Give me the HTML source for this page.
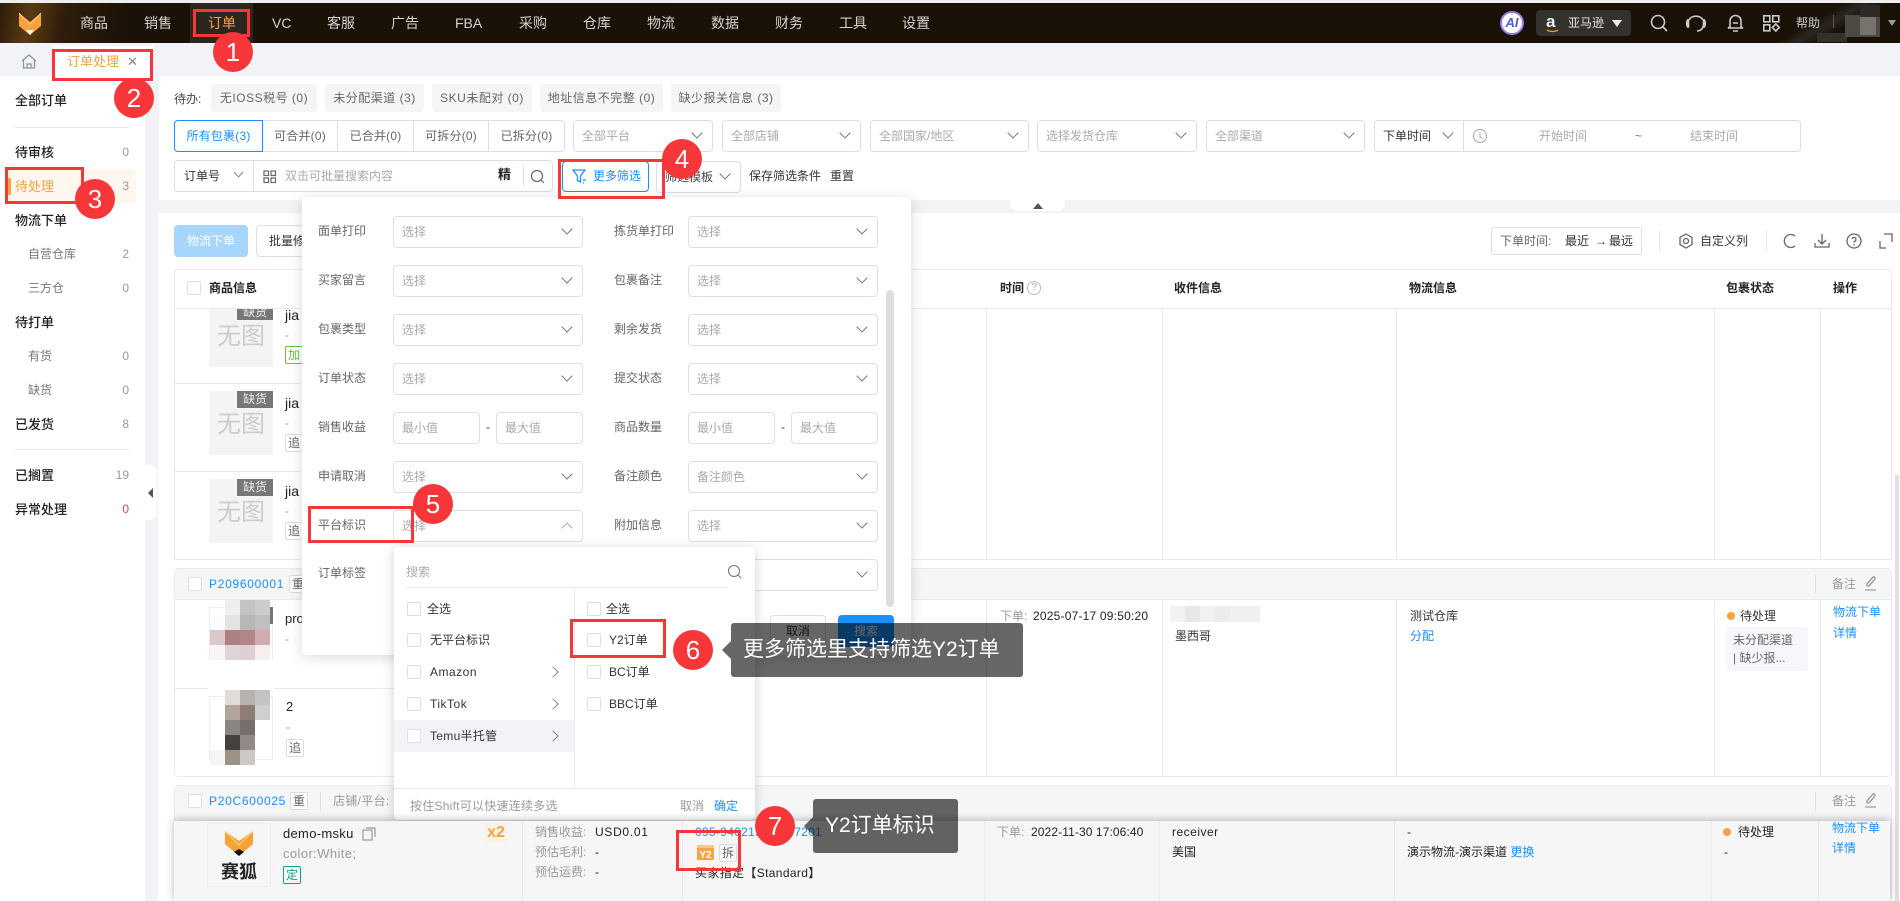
<!DOCTYPE html>
<html lang="zh-CN"><head><meta charset="utf-8"><title>订单处理</title>
<style>
*{box-sizing:border-box}
html,body{margin:0;padding:0}
body{width:1900px;height:901px;overflow:hidden;position:relative;background:#f2f3f7;font:12px/18px "Liberation Sans","Noto Sans CJK SC",sans-serif;color:#333}
.a{position:absolute;white-space:nowrap}
.b{position:absolute;background:#fff}
.nav{color:#d6d3cf;font-size:14px;line-height:20px;top:13px}
.side{left:15px;font-size:13px;color:#222;font-weight:500;line-height:20px}
.sub{left:28px;font-size:12px;color:#777;line-height:20px}
.n{left:95px;width:34px;text-align:right;color:#999;font-size:12px;line-height:20px}
.chip{position:absolute;top:84px;height:28px;background:#f4f5f7;border-radius:3px;color:#666;text-align:center;line-height:28px;white-space:nowrap;letter-spacing:.5px}
.seg{position:absolute;top:120px;height:32px;border:1px solid #dcdfe6;border-left:0;text-align:center;line-height:30px;color:#666;background:#fff;letter-spacing:.2px}
.s{position:absolute;height:32px;border:1px solid #dcdfe6;border-radius:4px;background:#fff;padding-left:8px;line-height:30px;color:#aaa;white-space:nowrap}
.s i,.ch{position:absolute;right:11px;top:8px;width:8px;height:8px;border-right:1.3px solid #777;border-bottom:1.3px solid #777;transform:rotate(45deg)}
.ch{right:auto}
.lb{color:#666}
.th{font-weight:700;color:#222;top:279px}
.v{position:absolute;width:1px;background:#e8eaef}
.h{position:absolute;height:1px;background:#e8eaef}
.ph{position:absolute;width:64px;height:64px;background:#f4f4f4;color:#ccc;font-size:24px;line-height:68px;text-align:center}
.ph b{position:absolute;right:0;top:0;width:36px;height:17px;background:#777;color:#eee;font-size:12px;font-weight:400;line-height:17px}
.tag{position:absolute;border:1px solid #ddd;border-radius:2px;text-align:center;color:#666;line-height:16px;background:#fff;width:18px;height:18px}
.cb{position:absolute;width:14px;height:14px;border:1px solid #dcdfe6;border-radius:2px;background:#fff}
.bl{color:#1890ff}
.gr{color:#999}
.rb{position:absolute;border:3px solid #f73639;z-index:20}
.c{position:absolute;width:40px;height:40px;border-radius:50%;background:#f73639;color:#fff;font-size:26px;line-height:40px;text-align:center;z-index:21}
.tip{position:absolute;background:rgba(0,0,0,.6);border-radius:3px;color:#fff;font-size:21px;line-height:54px;height:54px;z-index:19;white-space:nowrap}
.tip:before{content:"";position:absolute;left:-9px;top:18px;border:9px solid transparent;border-left:0;border-right-color:rgba(0,0,0,.6)}
svg{position:absolute;left:0;top:0}
</style></head><body>

<!-- top -->
<div class="b" style="left:0;top:0;width:1900px;height:3px;background:#eee"></div>
<div class="a" style="left:0;top:3px;width:1900px;height:40px;background:linear-gradient(100deg,#2c1c0a 0,#5a3a14 32px,#2e1d0a 65px,#1a1107 130px,#191106 100%)"></div>
<div class="a" style="left:1760px;top:3px;width:140px;height:40px;background:linear-gradient(150deg,transparent 40%,#2a2620 50%,transparent 60%)"></div>
<div class="a" style="left:190px;top:3px;width:63px;height:40px;background:#2c261e"></div>
<div class="a nav" style="left:80px">商品</div><div class="a nav" style="left:144px">销售</div>
<div class="a nav" style="left:208px;color:#f8a23c">订单</div><div class="a nav" style="left:272px">VC</div>
<div class="a nav" style="left:327px">客服</div><div class="a nav" style="left:391px">广告</div>
<div class="a nav" style="left:455px">FBA</div><div class="a nav" style="left:519px">采购</div>
<div class="a nav" style="left:583px">仓库</div><div class="a nav" style="left:647px">物流</div>
<div class="a nav" style="left:711px">数据</div><div class="a nav" style="left:775px">财务</div>
<div class="a nav" style="left:839px">工具</div><div class="a nav" style="left:902px">设置</div>
<div class="a" style="left:1536px;top:10px;width:95px;height:26px;background:#35322d;border-radius:4px"></div>
<div class="a" style="left:1546px;top:11px;color:#eee;font-size:17px;line-height:22px;font-weight:700">a</div>
<div class="a" style="left:1568px;top:14px;color:#e6e6e6">亚马逊</div>
<div class="a" style="left:1796px;top:14px;color:#ccc">帮助</div>
<div class="a" style="left:1500px;top:11px;width:24px;height:24px;border-radius:50%;background:#fff;border:2px solid #8f7cf0;color:#4a5be0;font-size:13px;font-weight:700;font-style:italic;line-height:20px;text-align:center">AI</div>

<!-- tab bar -->
<div class="b" style="left:52px;top:46px;width:101px;height:30px"></div>
<div class="a" style="left:67px;top:53px;color:#f8a23c;font-size:13px">订单处理</div>
<div class="a" style="left:127px;top:53px;color:#888;font-size:13px">✕</div>

<!-- sidebar -->
<div class="b" style="left:0;top:76px;width:145px;height:825px"></div>
<div class="a side" style="top:91px">全部订单</div>
<div class="h" style="left:15px;top:127px;width:114px"></div>
<div class="a side" style="top:143px">待审核</div><div class="a n" style="top:142px">0</div>
<div class="a" style="left:5px;top:169px;width:131px;height:34px;background:#fff7ef;border-radius:3px"></div>
<div class="a" style="left:8px;top:178px;width:3px;height:17px;background:#f8a23c"></div>
<div class="a side" style="top:177px;color:#f8a23c;font-weight:400">待处理</div><div class="a n" style="top:176px">3</div>
<div class="a side" style="top:211px">物流下单</div>
<div class="a sub" style="top:244px">自营仓库</div><div class="a n" style="top:244px">2</div>
<div class="a sub" style="top:278px">三方仓</div><div class="a n" style="top:278px">0</div>
<div class="a side" style="top:313px">待打单</div>
<div class="a sub" style="top:346px">有货</div><div class="a n" style="top:346px">0</div>
<div class="a sub" style="top:380px">缺货</div><div class="a n" style="top:380px">0</div>
<div class="a side" style="top:415px">已发货</div><div class="a n" style="top:414px">8</div>
<div class="h" style="left:15px;top:449px;width:114px"></div>
<div class="a side" style="top:466px">已搁置</div><div class="a n" style="top:465px">19</div>
<div class="a side" style="top:500px">异常处理</div><div class="a n" style="top:499px;color:#f5394a">0</div>
<div class="a" style="left:145px;top:465px;width:12px;height:55px;background:#fff;border-radius:0 8px 8px 0"></div>
<div class="a" style="left:148px;top:488px;border:5px solid transparent;border-left:0;border-right:5px solid #555"></div>

<!-- filter panel -->
<div class="b" style="left:159px;top:76px;width:1741px;height:124px"></div>
<div class="a" style="left:174px;top:90px;color:#444">待办:</div>
<div class="chip" style="left:211px;width:106px">无IOSS税号 (0)</div>
<div class="chip" style="left:325px;width:99px">未分配渠道 (3)</div>
<div class="chip" style="left:432px;width:100px">SKU未配对 (0)</div>
<div class="chip" style="left:540px;width:123px">地址信息不完整 (0)</div>
<div class="chip" style="left:671px;width:110px">缺少报关信息 (3)</div>

<div class="seg" style="left:263px;width:75px">可合并(0)</div>
<div class="seg" style="left:338px;width:76px">已合并(0)</div>
<div class="seg" style="left:414px;width:75px">可拆分(0)</div>
<div class="seg" style="left:489px;width:76px;border-radius:0 4px 4px 0">已拆分(0)</div>
<div class="seg" style="left:174px;width:89px;border:1px solid #1890ff;border-radius:4px 0 0 4px;color:#1890ff">所有包裹(3)</div>
<div class="s" style="left:573px;top:120px;width:140px">全部平台<i></i></div>
<div class="s" style="left:722px;top:120px;width:139px">全部店铺<i></i></div>
<div class="s" style="left:870px;top:120px;width:159px">全部国家/地区<i></i></div>
<div class="s" style="left:1037px;top:120px;width:160px">选择发货仓库<i></i></div>
<div class="s" style="left:1206px;top:120px;width:159px">全部渠道<i></i></div>
<div class="s" style="left:1374px;top:120px;width:90px;color:#333;border-radius:4px 0 0 4px">下单时间<i></i></div>
<div class="s" style="left:1463px;top:120px;width:338px;border-radius:0 4px 4px 0"></div>
<div class="a" style="left:1539px;top:127px;color:#aaa">开始时间</div>
<div class="a" style="left:1635px;top:127px;color:#777">~</div>
<div class="a" style="left:1690px;top:127px;color:#aaa">结束时间</div>

<div class="s" style="left:174px;top:160px;width:379px;padding-left:9px;color:#333">订单号</div>
<div class="ch" style="left:235px;top:169px;width:7px;height:7px;border-color:#888"></div>
<div class="v" style="left:253px;top:161px;height:30px;background:#dcdfe6"></div>
<div class="a" style="left:285px;top:167px;color:#aaa">双击可批量搜索内容</div>
<div class="a" style="left:498px;top:166px;color:#222;font-size:13px;font-weight:700">精</div>
<div class="v" style="left:523px;top:166px;height:20px;background:#dcdfe6"></div>
<div class="s" style="left:656px;top:161px;width:85px;color:#444">筛选模板<i></i></div>
<div class="a" style="left:562px;top:161px;width:87px;height:31px;border:1px solid #1890ff;border-radius:4px;background:#fff"></div>
<div class="a bl" style="left:593px;top:167px">更多筛选</div>
<div class="a" style="left:749px;top:167px;color:#333">保存筛选条件</div>
<div class="a" style="left:830px;top:167px;color:#333">重置</div>
<div class="a" style="left:1010px;top:200px;width:55px;height:11px;background:#fff;border-radius:0 0 8px 8px"></div>
<div class="a" style="left:1033px;top:203px;border:5px solid transparent;border-top:0;border-bottom:6px solid #555"></div>

<!-- table area -->
<div class="b" style="left:158px;top:213px;width:1742px;height:688px"></div>
<div class="a" style="left:1895px;top:475px;width:4px;height:426px;background:#e0e0e3"></div>
<div class="a" style="left:174px;top:225px;width:74px;height:32px;background:#a8d5fb;border-radius:4px;color:#fff;text-align:center;line-height:32px">物流下单</div>
<div class="a" style="left:256px;top:225px;width:80px;height:32px;border:1px solid #dcdfe6;border-radius:4px;color:#333;line-height:30px;padding-left:12px">批量修改</div>
<div class="a" style="left:1491px;top:227px;width:151px;height:28px;border:1px solid #dcdfe6;border-radius:3px"></div>
<div class="a" style="left:1500px;top:232px;color:#666">下单时间:</div>
<div class="a" style="left:1565px;top:232px;color:#333">最近</div>
<div class="a" style="left:1595px;top:232px;color:#333">→</div>
<div class="a" style="left:1609px;top:232px;color:#333">最远</div>
<div class="v" style="left:1659px;top:230px;height:22px"></div><div class="v" style="left:1766px;top:230px;height:22px"></div>
<div class="a" style="left:1700px;top:232px;color:#333">自定义列</div>

<!-- table header -->
<div class="a" style="left:174px;top:269px;width:1718px;height:40px;border:1px solid #e8eaef;border-radius:4px 4px 0 0;background:#fff"></div>
<div class="cb" style="left:187px;top:281px"></div>
<div class="a th" style="left:209px">商品信息</div><div class="a th" style="left:1000px">时间</div>
<div class="a" style="left:1027px;top:281px;width:14px;height:14px;border:1px solid #bbb;border-radius:50%;color:#aaa;font-size:10px;line-height:12px;text-align:center">?</div>
<div class="a th" style="left:1174px">收件信息</div><div class="a th" style="left:1409px">物流信息</div>
<div class="a th" style="left:1726px">包裹状态</div><div class="a th" style="left:1833px">操作</div>

<!-- order 1 rows -->
<div class="v" style="left:174px;top:309px;height:250px"></div>
<div class="v" style="left:1891px;top:309px;height:250px"></div>
<div class="v" style="left:986px;top:309px;height:250px"></div><div class="v" style="left:1162px;top:309px;height:250px"></div>
<div class="v" style="left:1396px;top:309px;height:250px"></div><div class="v" style="left:1714px;top:309px;height:250px"></div>
<div class="v" style="left:1820px;top:309px;height:250px"></div>
<div class="h" style="left:174px;top:383px;width:520px"></div><div class="h" style="left:174px;top:471px;width:520px"></div>
<div class="h" style="left:174px;top:559px;width:1718px"></div>
<div class="ph" style="left:209px;top:309px;height:58px;line-height:56px">无图<b style="top:0;height:11px;line-height:7px;overflow:hidden">缺货</b></div>
<div class="ph" style="left:209px;top:391px">无图<b>缺货</b></div>
<div class="ph" style="left:209px;top:479px">无图<b>缺货</b></div>
<div class="a" style="left:285px;top:306px;color:#222;font-size:14px">jia</div>
<div class="a gr" style="left:285px;top:326px">-</div>
<div class="tag" style="left:285px;top:346px;border-color:#67c23a;color:#67c23a">加</div>
<div class="a" style="left:285px;top:394px;color:#222;font-size:14px">jia</div>
<div class="a gr" style="left:285px;top:414px">-</div><div class="tag" style="left:285px;top:434px">追</div>
<div class="a" style="left:285px;top:482px;color:#222;font-size:14px">jia</div>
<div class="a gr" style="left:285px;top:502px">-</div><div class="tag" style="left:285px;top:522px">追</div>

<!-- order 2 -->
<div class="a" style="left:174px;top:568px;width:1718px;height:209px;border:1px solid #e8eaef;border-radius:4px;background:#fff"></div>
<div class="a" style="left:175px;top:569px;width:1716px;height:31px;background:#f5f6f8;border-bottom:1px solid #e8eaef"></div>
<div class="cb" style="left:188px;top:577px"></div>
<div class="a bl" style="left:209px;top:575px;letter-spacing:.7px">P209600001</div>
<div class="tag" style="left:289px;top:575px">重</div>
<div class="v" style="left:1815px;top:575px;height:18px;background:#ddd"></div>
<div class="a gr" style="left:1832px;top:575px">备注</div>
<div class="h" style="left:174px;top:688px;width:510px"></div>
<div class="v" style="left:986px;top:600px;height:177px"></div><div class="v" style="left:1162px;top:600px;height:177px"></div>
<div class="v" style="left:1396px;top:600px;height:177px"></div><div class="v" style="left:1714px;top:600px;height:177px"></div>
<div class="v" style="left:1820px;top:600px;height:177px"></div>
<div class="a" style="left:209px;top:607px;width:64px;height:64px;border:1px solid #eee"></div>
<div class="a" style="left:209px;top:696px;width:64px;height:64px;border:1px solid #eee"></div>
<div class="a" style="left:268px;top:607px;width:5px;height:17px;background:#777"></div>
<div class="a" style="left:285px;top:610px;color:#222;font-size:13px">product</div>
<div class="a gr" style="left:285px;top:630px">-</div>
<div class="a" style="left:286px;top:698px;color:#222;font-size:13px">2</div>
<div class="a gr" style="left:286px;top:718px">-</div><div class="tag" style="left:286px;top:739px">追</div>
<div class="a gr" style="left:1000px;top:607px">下单:</div>
<div class="a" style="left:1033px;top:607px;color:#222;letter-spacing:.2px">2025-07-17 09:50:20</div>
<div class="a" style="left:1175px;top:627px;color:#333">墨西哥</div>
<div class="a" style="left:1410px;top:607px;color:#333">测试仓库</div>
<div class="a bl" style="left:1410px;top:627px">分配</div>
<div class="a" style="left:1727px;top:612px;width:8px;height:8px;border-radius:50%;background:#f8a23c"></div>
<div class="a" style="left:1740px;top:607px;color:#333">待处理</div>
<div class="a" style="left:1726px;top:627px;width:82px;height:44px;background:#f5f7fa;border-radius:2px"></div>
<div class="a" style="left:1733px;top:631px;color:#666">未分配渠道</div>
<div class="a" style="left:1733px;top:649px;color:#666">| 缺少报...</div>
<div class="a bl" style="left:1833px;top:603px">物流下单</div>
<div class="a bl" style="left:1833px;top:624px">详情</div>

<!-- order 3 header -->
<div class="a" style="left:174px;top:785px;width:1718px;height:116px;border:1px solid #e8eaef;border-radius:4px;background:#f5f6f8"></div>
<div class="cb" style="left:188px;top:794px"></div>
<div class="a bl" style="left:209px;top:792px;letter-spacing:.7px">P20C600025</div>
<div class="tag" style="left:290px;top:792px">重</div>
<div class="v" style="left:320px;top:792px;height:18px;background:#ddd"></div>
<div class="a gr" style="left:333px;top:792px;letter-spacing:.3px">店铺/平台:</div>
<div class="v" style="left:1815px;top:792px;height:18px;background:#ddd"></div>
<div class="a gr" style="left:1832px;top:792px">备注</div>

<!-- base icons -->
<svg width="1900" height="901" style="z-index:1" fill="none">
 <path d="M19 13l11 9 11-9v13l-11 9-11-9z" fill="#f8a23c"/><path d="M19 13l11 11 11-11" stroke="#ffd9a0" stroke-width=".8"/><path d="M26 30l4 5 4-5z" fill="#fff"/>
 <g stroke="#8a94a0" stroke-width="1.3"><path d="M22 61l7-6 7 6M23.500 60v8h11v-8M27 68v-4h4v4"/></g>
 <g stroke="#ccc" stroke-width="1.6">
  <circle cx="1658" cy="22" r="6.500"/><path d="M1663 27l4 4"/>
  <path d="M1689 20a7.500 6 0 0 1 14 0M1703 26c0 3-3 5-6 5"/><path d="M1688.500 20h-1c-1 2-1 5 0 7h1zM1703.500 20h1c1 2 1 5 0 7h-1z" fill="#ccc"/>
  <path d="M1730 27v-6a5.500 5.500 0 0 1 11 0v6l2 1h-15zM1733 23h5M1733 31h5"/>
  <rect x="1763.800" y="15.800" width="6" height="6"/><rect x="1772.800" y="15.800" width="6" height="6"/><rect x="1763.800" y="24.800" width="6" height="6"/><path d="M1775.800 24l3.500 3.500-3.500 3.500-3.500-3.500z"/>
 </g>
 <path d="M1547 30c3 2 8 2 11 0" stroke="#f0a030" stroke-width="1.200"/>
 <path d="M1612 20h10l-5 7z" fill="#eee"/>
 <path d="M1833.500 15v13" stroke="#555"/>
 <rect x="1817" y="33" width="30" height="9" fill="#35302a"/><rect x="1845" y="15" width="35" height="22" fill="#4d4a45"/><rect x="1860" y="5" width="20" height="12" fill="#2e2a25"/><rect x="1860" y="17" width="16" height="18" fill="#77736d"/>
 <path d="M1888 20h8l-4 6z" fill="#999"/>
 <g stroke="#aaa" stroke-width="1"><circle cx="1480" cy="136" r="6.500"/><path d="M1480 132v4.500l2.500 2"/></g>
 <g stroke="#666" stroke-width="1.200"><rect x="264" y="171" width="4.500" height="4.500"/><rect x="271" y="171" width="4.500" height="4.500"/><rect x="264" y="178" width="4.500" height="4.500"/><rect x="271" y="178" width="4.500" height="4.500"/>
  <circle cx="537" cy="176" r="5.500"/><path d="M541 180l3 3"/></g>
 <g stroke="#1890ff" stroke-width="1.300"><path d="M573 170h12l-4.500 6v6l-3-1.500v-4.500zM583 180h3M583 183h1"/></g>
 <g stroke="#666" stroke-width="1.300">
  <path d="M1686 234l6 3.500v7l-6 3.500-6-3.500v-7z"/><circle cx="1686" cy="241" r="2.500"/>
  <path d="M1795 236a6.500 6.500 0 1 0 0 10"/>
  <path d="M1822 234v10M1818 240l4 4 4-4M1815 243v4h14v-4"/>
  <circle cx="1854" cy="241" r="7"/><path d="M1852 239a2 2 0 1 1 2 2.500v1M1854 244v1.500"/>
  <path d="M1880 241v7h6M1884 234h8v8"/>
 </g>
 <g stroke="#888" stroke-width="1.100"><path d="M1865 590h11M1869 586l6-7a1.500 1.500 0 0 0-2-2l-6 7v2z"/><path d="M1865 807h11M1869 803l6-7a1.500 1.500 0 0 0-2-2l-6 7v2z"/></g>
 <!-- mosaic -->
 <g>
  <rect x="225" y="600" width="15" height="15" fill="#eee"/><rect x="240" y="600" width="15" height="15" fill="#c3c3c3"/><rect x="255" y="600" width="15" height="15" fill="#ccc"/>
  <rect x="210" y="615" width="15" height="15" fill="#fcfcfc"/><rect x="225" y="615" width="15" height="15" fill="#e6e2e2"/><rect x="240" y="615" width="15" height="15" fill="#bbb7b6"/><rect x="255" y="615" width="15" height="15" fill="#c2bebe"/>
  <rect x="210" y="630" width="15" height="15" fill="#dcc8cb"/><rect x="225" y="630" width="15" height="15" fill="#ae8085"/><rect x="240" y="630" width="15" height="15" fill="#b28589"/><rect x="255" y="630" width="15" height="15" fill="#d2aab1"/>
  <rect x="210" y="645" width="15" height="15" fill="#f9f5f5"/><rect x="225" y="645" width="15" height="15" fill="#dfd5d7"/><rect x="240" y="645" width="15" height="15" fill="#ddd0d2"/><rect x="255" y="645" width="15" height="15" fill="#f6eff0"/>
  <rect x="208" y="660" width="66" height="30" fill="#fff"/>
  <rect x="225" y="690" width="15" height="15" fill="#e2dcd9"/><rect x="240" y="690" width="15" height="15" fill="#b5b2b0"/><rect x="255" y="690" width="15" height="15" fill="#c3c3c3"/>
  <rect x="225" y="705" width="15" height="15" fill="#b1a59d"/><rect x="240" y="705" width="15" height="15" fill="#8c7e76"/><rect x="255" y="705" width="15" height="15" fill="#cfcfcf"/>
  <rect x="225" y="720" width="15" height="15" fill="#8a8580"/><rect x="240" y="720" width="15" height="15" fill="#766e6a"/>
  <rect x="225" y="735" width="15" height="15" fill="#444240"/><rect x="240" y="735" width="15" height="15" fill="#918a86"/>
  <rect x="210" y="750" width="15" height="15" fill="#f6f5f4"/><rect x="225" y="750" width="15" height="15" fill="#9c9187"/><rect x="240" y="750" width="15" height="15" fill="#cdc8c4"/>
  <rect x="1170" y="606" width="15" height="16" fill="#f2f2f2"/><rect x="1185" y="606" width="15" height="16" fill="#e8e8e8"/><rect x="1200" y="606" width="15" height="16" fill="#f1f1f1"/><rect x="1215" y="606" width="15" height="16" fill="#ececec"/><rect x="1230" y="606" width="30" height="16" fill="#f0f0f0"/>
 </g>
</svg>

<!-- more filters panel -->
<div class="a" style="left:302px;top:197px;width:609px;height:458px;background:#fff;border-radius:4px;box-shadow:0 2px 14px rgba(0,0,0,.15);z-index:5">
 <div class="a" style="left:584px;top:93px;width:8px;height:317px;background:#dcdde1;border-radius:4px"></div>
 <div class="a lb" style="left:16px;top:25px">面单打印</div><div class="s" style="left:91px;top:19px;width:190px">选择<i></i></div>
 <div class="a lb" style="left:312px;top:25px">拣货单打印</div><div class="s" style="left:386px;top:19px;width:190px">选择<i></i></div>
 <div class="a lb" style="left:16px;top:74px">买家留言</div><div class="s" style="left:91px;top:68px;width:190px">选择<i></i></div>
 <div class="a lb" style="left:312px;top:74px">包裹备注</div><div class="s" style="left:386px;top:68px;width:190px">选择<i></i></div>
 <div class="a lb" style="left:16px;top:123px">包裹类型</div><div class="s" style="left:91px;top:117px;width:190px">选择<i></i></div>
 <div class="a lb" style="left:312px;top:123px">剩余发货</div><div class="s" style="left:386px;top:117px;width:190px">选择<i></i></div>
 <div class="a lb" style="left:16px;top:172px">订单状态</div><div class="s" style="left:91px;top:166px;width:190px">选择<i></i></div>
 <div class="a lb" style="left:312px;top:172px">提交状态</div><div class="s" style="left:386px;top:166px;width:190px">选择<i></i></div>
 <div class="a lb" style="left:16px;top:221px">销售收益</div><div class="s" style="left:91px;top:215px;width:87px">最小值</div><div class="a" style="left:184px;top:221px">-</div><div class="s" style="left:194px;top:215px;width:87px">最大值</div>
 <div class="a lb" style="left:312px;top:221px">商品数量</div><div class="s" style="left:386px;top:215px;width:87px">最小值</div><div class="a" style="left:479px;top:221px">-</div><div class="s" style="left:489px;top:215px;width:87px">最大值</div>
 <div class="a lb" style="left:16px;top:270px">申请取消</div><div class="s" style="left:91px;top:264px;width:190px">选择<i></i></div>
 <div class="a lb" style="left:312px;top:270px">备注颜色</div><div class="s" style="left:386px;top:264px;width:190px">备注颜色<i></i></div>
 <div class="a lb" style="left:16px;top:319px">平台标识</div><div class="s" style="left:91px;top:313px;width:190px">选择<i style="top:13px;transform:rotate(225deg);border-color:#aaa"></i></div>
 <div class="a lb" style="left:312px;top:319px">附加信息</div><div class="s" style="left:386px;top:313px;width:190px">选择<i></i></div>
 <div class="a lb" style="left:16px;top:367px">订单标签</div>
 <div class="s" style="left:386px;top:362px;width:190px">选择<i></i></div>
 <div class="s" style="left:468px;top:418px;width:56px;color:#333;text-align:center;padding:0">取消</div>
 <div class="a" style="left:536px;top:418px;width:56px;height:32px;background:#1890ff;border-radius:4px;color:#fff;text-align:center;line-height:32px">搜索</div>
</div>

<!-- platform dropdown -->
<div class="a" style="left:394px;top:547px;width:361px;height:273px;background:#fff;border-radius:4px;box-shadow:0 2px 12px rgba(0,0,0,.18);z-index:6">
 <div class="a" style="left:12px;top:16px;color:#aaa">搜索</div>
 <svg width="361" height="60" fill="none" style="left:0;top:0"><circle cx="340" cy="24" r="5.500" stroke="#777" stroke-width="1.100"/><path d="M344 28l3 3" stroke="#777" stroke-width="1.100"/></svg>
 <div class="h" style="left:12px;top:40px;width:322px;background:#e8eaef"></div>
 <div class="v" style="left:180px;top:41px;height:200px;background:#e8eaef"></div>
 <div class="a" style="left:0;top:173px;width:180px;height:32px;background:#f2f3f6"></div>
 <div class="cb" style="left:13px;top:55px"></div><div class="a" style="left:33px;top:53px;color:#333">全选</div>
 <div class="cb" style="left:13px;top:86px"></div><div class="a" style="left:36px;top:84px;color:#333">无平台标识</div>
 <div class="cb" style="left:13px;top:118px"></div><div class="a" style="left:36px;top:116px;color:#333;letter-spacing:.5px">Amazon</div>
 <div class="cb" style="left:13px;top:150px"></div><div class="a" style="left:36px;top:148px;color:#333;letter-spacing:.5px">TikTok</div>
 <div class="cb" style="left:13px;top:182px"></div><div class="a" style="left:36px;top:180px;color:#333;letter-spacing:.3px">Temu半托管</div>
 <div class="ch" style="left:155px;top:121px;transform:rotate(-45deg);border-color:#888"></div>
 <div class="ch" style="left:155px;top:153px;transform:rotate(-45deg);border-color:#888"></div>
 <div class="ch" style="left:155px;top:185px;transform:rotate(-45deg);border-color:#888"></div>
 <div class="cb" style="left:193px;top:55px"></div><div class="a" style="left:212px;top:53px;color:#333">全选</div>
 <div class="cb" style="left:193px;top:86px"></div><div class="a" style="left:215px;top:84px;color:#333">Y2订单</div>
 <div class="cb" style="left:193px;top:118px"></div><div class="a" style="left:215px;top:116px;color:#333">BC订单</div>
 <div class="cb" style="left:193px;top:150px"></div><div class="a" style="left:215px;top:148px;color:#333">BBC订单</div>
 <div class="h" style="left:0;top:241px;width:361px;background:#e8eaef"></div>
 <div class="a gr" style="left:16px;top:250px;letter-spacing:.25px">按住Shift可以快速连续多选</div>
 <div class="a gr" style="left:286px;top:250px">取消</div>
 <div class="a bl" style="left:320px;top:250px">确定</div>
</div>

<!-- highlighted row -->
<div class="a" style="left:174px;top:821px;width:1716px;height:80px;background:#f6f6f6;box-shadow:0 -1px 8px rgba(0,0,0,.28);z-index:7">
 <div class="a" style="left:33px;top:2px;width:64px;height:64px;border:1px solid #eee;background:#f6f6f6"></div>
 <svg width="120" height="70" fill="none" style="left:0;top:0"><path d="M51 10l14 10 14-10v13l-14 12-14-12z" fill="#f7a234"/><path d="M51 10l14 14 14-14" stroke="#ffe0b0" stroke-width=".8"/><path d="M60 31l5 4 5-4-5-3z" fill="#111"/></svg>
 <div class="a" style="left:47px;top:40px;width:36px;font-size:18px;line-height:22px;font-weight:700;color:#222">赛狐</div>
 <div class="a" style="left:109px;top:4px;color:#222;font-size:13px;letter-spacing:.3px">demo-msku</div>
 <svg width="14" height="14" fill="none" stroke="#999" stroke-width="1.200" style="left:188px;top:6px"><rect x="1" y="3" width="9" height="10"/><path d="M4 1h9v9"/></svg>
 <div class="a gr" style="left:109px;top:24px;font-size:13px;letter-spacing:.4px">color:White;</div>
 <div class="tag" style="left:109px;top:45px;border-color:#0aa88a;color:#0aa88a;background:#f6f6f6">定</div>
 <div class="a" style="left:311px;top:2px;width:22px;height:20px;background:#f9f2e8;color:#f8a23c;font-size:16px;font-weight:700;line-height:20px;text-align:center">x2</div>
 <div class="v" style="left:348px;top:0;height:80px"></div><div class="v" style="left:508px;top:0;height:80px"></div>
 <div class="v" style="left:810px;top:0;height:80px"></div><div class="v" style="left:985px;top:0;height:80px"></div>
 <div class="v" style="left:1220px;top:0;height:80px"></div><div class="v" style="left:1537px;top:0;height:80px"></div>
 <div class="v" style="left:1644px;top:0;height:80px"></div>
 <div class="a gr" style="left:361px;top:2px">销售收益:</div><div class="a" style="left:421px;top:2px;color:#222;letter-spacing:.7px">USD0.01</div>
 <div class="a gr" style="left:361px;top:22px">预估毛利:</div><div class="a" style="left:421px;top:22px;color:#222">-</div>
 <div class="a gr" style="left:361px;top:42px">预估运费:</div><div class="a" style="left:421px;top:42px;color:#222">-</div>
 <div class="a bl" style="left:521px;top:2px;letter-spacing:.3px">095-9462156-6567201</div>
 <div class="a" style="left:523px;top:24px;width:17px;height:15px;background:#f8a24c;color:#fff;font-size:10px;font-weight:700;line-height:16px;text-align:center;border-top:3px solid #fbc68c">Y2</div>
 <div class="tag" style="left:545px;top:23px;background:#f6f6f6">拆</div>
 <div class="a" style="left:521px;top:43px;color:#222;letter-spacing:.35px">买家指定【Standard】</div>
 <div class="a gr" style="left:823px;top:2px">下单:</div>
 <div class="a" style="left:857px;top:2px;color:#222;letter-spacing:.1px">2022-11-30 17:06:40</div>
 <div class="a" style="left:998px;top:2px;color:#222;letter-spacing:.5px">receiver</div>
 <div class="a" style="left:998px;top:22px;color:#222">美国</div>
 <div class="a" style="left:1233px;top:2px;color:#222">-</div>
 <div class="a" style="left:1233px;top:22px;color:#222">演示物流-演示渠道 <span class="bl">更换</span></div>
 <div class="a" style="left:1549px;top:7px;width:8px;height:8px;border-radius:50%;background:#f8a23c"></div>
 <div class="a" style="left:1564px;top:2px;color:#222">待处理</div>
 <div class="a" style="left:1550px;top:22px;color:#222">-</div>
 <div class="a bl" style="left:1658px;top:-2px">物流下单</div>
 <div class="a bl" style="left:1658px;top:18px">详情</div>
</div>

<!-- annotations -->
<div class="rb" style="left:193px;top:9px;width:57px;height:28px"></div>
<div class="rb" style="left:52px;top:49px;width:101px;height:32px"></div>
<div class="rb" style="left:5px;top:167px;width:79px;height:37px"></div>
<div class="rb" style="left:558px;top:159px;width:107px;height:40px"></div>
<div class="rb" style="left:308px;top:506px;width:106px;height:37px"></div>
<div class="rb" style="left:570px;top:619px;width:96px;height:39px"></div>
<div class="rb" style="left:676px;top:830px;width:65px;height:41px"></div>
<div class="c" style="left:213px;top:32px">1</div>
<div class="c" style="left:114px;top:78px">2</div>
<div class="c" style="left:75px;top:179px">3</div>
<div class="c" style="left:662px;top:139px">4</div>
<div class="c" style="left:413px;top:484px">5</div>
<div class="c" style="left:673px;top:630px">6</div>
<div class="c" style="left:755px;top:806px">7</div>
<div class="tip" style="left:731px;top:623px;width:292px;padding-left:12px">更多筛选里支持筛选Y2订单</div>
<div class="tip" style="left:813px;top:799px;width:145px;padding-left:12px">Y2订单标识</div>
</body></html>
